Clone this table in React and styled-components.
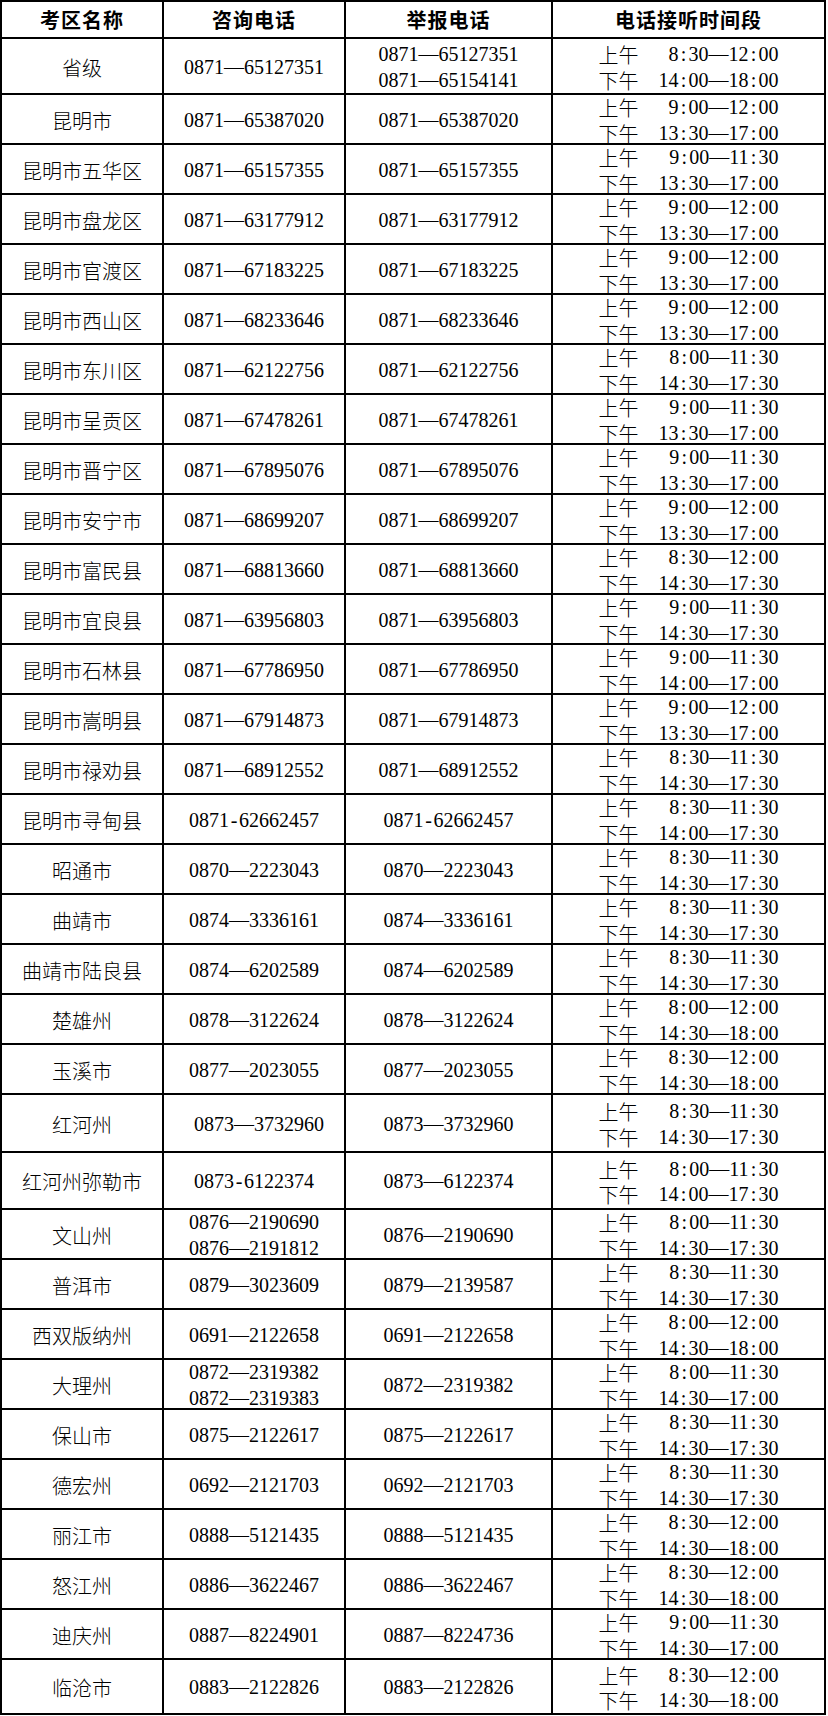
import React from 'react';
import styled, { createGlobalStyle } from 'styled-components';

const GlobalStyle = createGlobalStyle`
  html, body { margin: 0; padding: 0; background: #fff; }
  body {
    font-family: "Liberation Serif", "Noto Sans CJK SC", serif;
    color: #000;
  }
`;

const Sheet = styled.div`
  width: 824px;
  border-top: 2px solid #000;
  border-left: 2px solid #000;
  font-size: 20px;
  font-weight: 300;
`;

const Row = styled.div`
  display: grid;
  grid-template-columns: 162px 182px 207px 273px;
  height: ${(p) => p.$h}px;
`;

const Cell = styled.div`
  box-sizing: border-box;
  min-height: 0;
  border-right: 2px solid #000;
  border-bottom: 2px solid #000;
  display: flex;
  flex-direction: column;
  align-items: center;
  justify-content: center;
  padding-top: 3px;
  line-height: 25.5px;
  white-space: nowrap;
`;

const HeadCell = styled(Cell)`
  padding-top: 0;
  font-family: "Noto Sans CJK SC", sans-serif;
  font-weight: 700;
  letter-spacing: 1px;
`;

const Name = styled.span`
  font-family: "Noto Sans CJK SC", sans-serif;
`;

const Half = styled.span`
  display: inline-block;
  width: 0.5em;
  text-align: center;
`;

const Schedule = styled.div`
  display: grid;
  grid-template-columns: 40px 120px;
  column-gap: 20px;
`;

const Period = styled.span`
  font-family: "Noto Sans CJK SC", sans-serif;
`;

const Clock = styled.span`
  text-align: right;
`;

const fmt = (s) => {
  const out = [];
  let buf = '';
  [...s].forEach((ch, i) => {
    if (ch === ':' || ch === '-') {
      if (buf) out.push(buf);
      buf = '';
      out.push(<Half key={i}>{ch}</Half>);
    } else {
      buf += ch;
    }
  });
  if (buf) out.push(buf);
  return out;
};

const rows = [
  ['省级', ['0871—65127351'], ['0871—65127351', '0871—65154141'], '8:30—12:00', '14:00—18:00', 56],
  ['昆明市', ['0871—65387020'], ['0871—65387020'], '9:00—12:00', '13:30—17:00'],
  ['昆明市五华区', ['0871—65157355'], ['0871—65157355'], '9:00—11:30', '13:30—17:00'],
  ['昆明市盘龙区', ['0871—63177912'], ['0871—63177912'], '9:00—12:00', '13:30—17:00'],
  ['昆明市官渡区', ['0871—67183225'], ['0871—67183225'], '9:00—12:00', '13:30—17:00'],
  ['昆明市西山区', ['0871—68233646'], ['0871—68233646'], '9:00—12:00', '13:30—17:00'],
  ['昆明市东川区', ['0871—62122756'], ['0871—62122756'], '8:00—11:30', '14:30—17:30'],
  ['昆明市呈贡区', ['0871—67478261'], ['0871—67478261'], '9:00—11:30', '13:30—17:00'],
  ['昆明市晋宁区', ['0871—67895076'], ['0871—67895076'], '9:00—11:30', '13:30—17:00'],
  ['昆明市安宁市', ['0871—68699207'], ['0871—68699207'], '9:00—12:00', '13:30—17:00'],
  ['昆明市富民县', ['0871—68813660'], ['0871—68813660'], '8:30—12:00', '14:30—17:30'],
  ['昆明市宜良县', ['0871—63956803'], ['0871—63956803'], '9:00—11:30', '14:30—17:30'],
  ['昆明市石林县', ['0871—67786950'], ['0871—67786950'], '9:00—11:30', '14:00—17:00'],
  ['昆明市嵩明县', ['0871—67914873'], ['0871—67914873'], '9:00—12:00', '13:30—17:00'],
  ['昆明市禄劝县', ['0871—68912552'], ['0871—68912552'], '8:30—11:30', '14:30—17:30'],
  ['昆明市寻甸县', ['0871-62662457'], ['0871-62662457'], '8:30—11:30', '14:00—17:30'],
  ['昭通市', ['0870—2223043'], ['0870—2223043'], '8:30—11:30', '14:30—17:30'],
  ['曲靖市', ['0874—3336161'], ['0874—3336161'], '8:30—11:30', '14:30—17:30'],
  ['曲靖市陆良县', ['0874—6202589'], ['0874—6202589'], '8:30—11:30', '14:30—17:30'],
  ['楚雄州', ['0878—3122624'], ['0878—3122624'], '8:00—12:00', '14:30—18:00'],
  ['玉溪市', ['0877—2023055'], ['0877—2023055'], '8:30—12:00', '14:30—18:00'],
  ['红河州', ['\u20020873—3732960'], ['0873—3732960'], '8:30—11:30', '14:30—17:30', 58],
  ['红河州弥勒市', ['0873-6122374'], ['0873—6122374'], '8:00—11:30', '14:00—17:30', 57],
  ['文山州', ['0876—2190690', '0876—2191812'], ['0876—2190690'], '8:00—11:30', '14:30—17:30'],
  ['普洱市', ['0879—3023609'], ['0879—2139587'], '8:30—11:30', '14:30—17:30'],
  ['西双版纳州', ['0691—2122658'], ['0691—2122658'], '8:00—12:00', '14:30—18:00'],
  ['大理州', ['0872—2319382', '0872—2319383'], ['0872—2319382'], '8:00—11:30', '14:30—17:00'],
  ['保山市', ['0875—2122617'], ['0875—2122617'], '8:30—11:30', '14:30—17:30'],
  ['德宏州', ['0692—2121703'], ['0692—2121703'], '8:30—11:30', '14:30—17:30'],
  ['丽江市', ['0888—5121435'], ['0888—5121435'], '8:30—12:00', '14:30—18:00'],
  ['怒江州', ['0886—3622467'], ['0886—3622467'], '8:30—12:00', '14:30—18:00'],
  ['迪庆州', ['0887—8224901'], ['0887—8224736'], '9:00—11:30', '14:30—17:00'],
  ['临沧市', ['0883—2122826'], ['0883—2122826'], '8:30—12:00', '14:30—18:00', 55],
];

const Phones = ({ list }) => (
  <Cell>
    {list.map((p) => (
      <span key={p}>{fmt(p)}</span>
    ))}
  </Cell>
);

export default function App() {
  return (
    <>
      <GlobalStyle />
      <Sheet>
        <Row $h={37}>
          <HeadCell>考区名称</HeadCell>
          <HeadCell>咨询电话</HeadCell>
          <HeadCell>举报电话</HeadCell>
          <HeadCell>电话接听时间段</HeadCell>
        </Row>
        {rows.map(([name, ask, report, am, pm, h]) => (
          <Row key={name} $h={h || 50}>
            <Cell>
              <Name>{name}</Name>
            </Cell>
            <Phones list={ask} />
            <Phones list={report} />
            <Cell>
              <Schedule>
                <Period>上午</Period>
                <Clock>{fmt(am)}</Clock>
                <Period>下午</Period>
                <Clock>{fmt(pm)}</Clock>
              </Schedule>
            </Cell>
          </Row>
        ))}
      </Sheet>
    </>
  );
}
